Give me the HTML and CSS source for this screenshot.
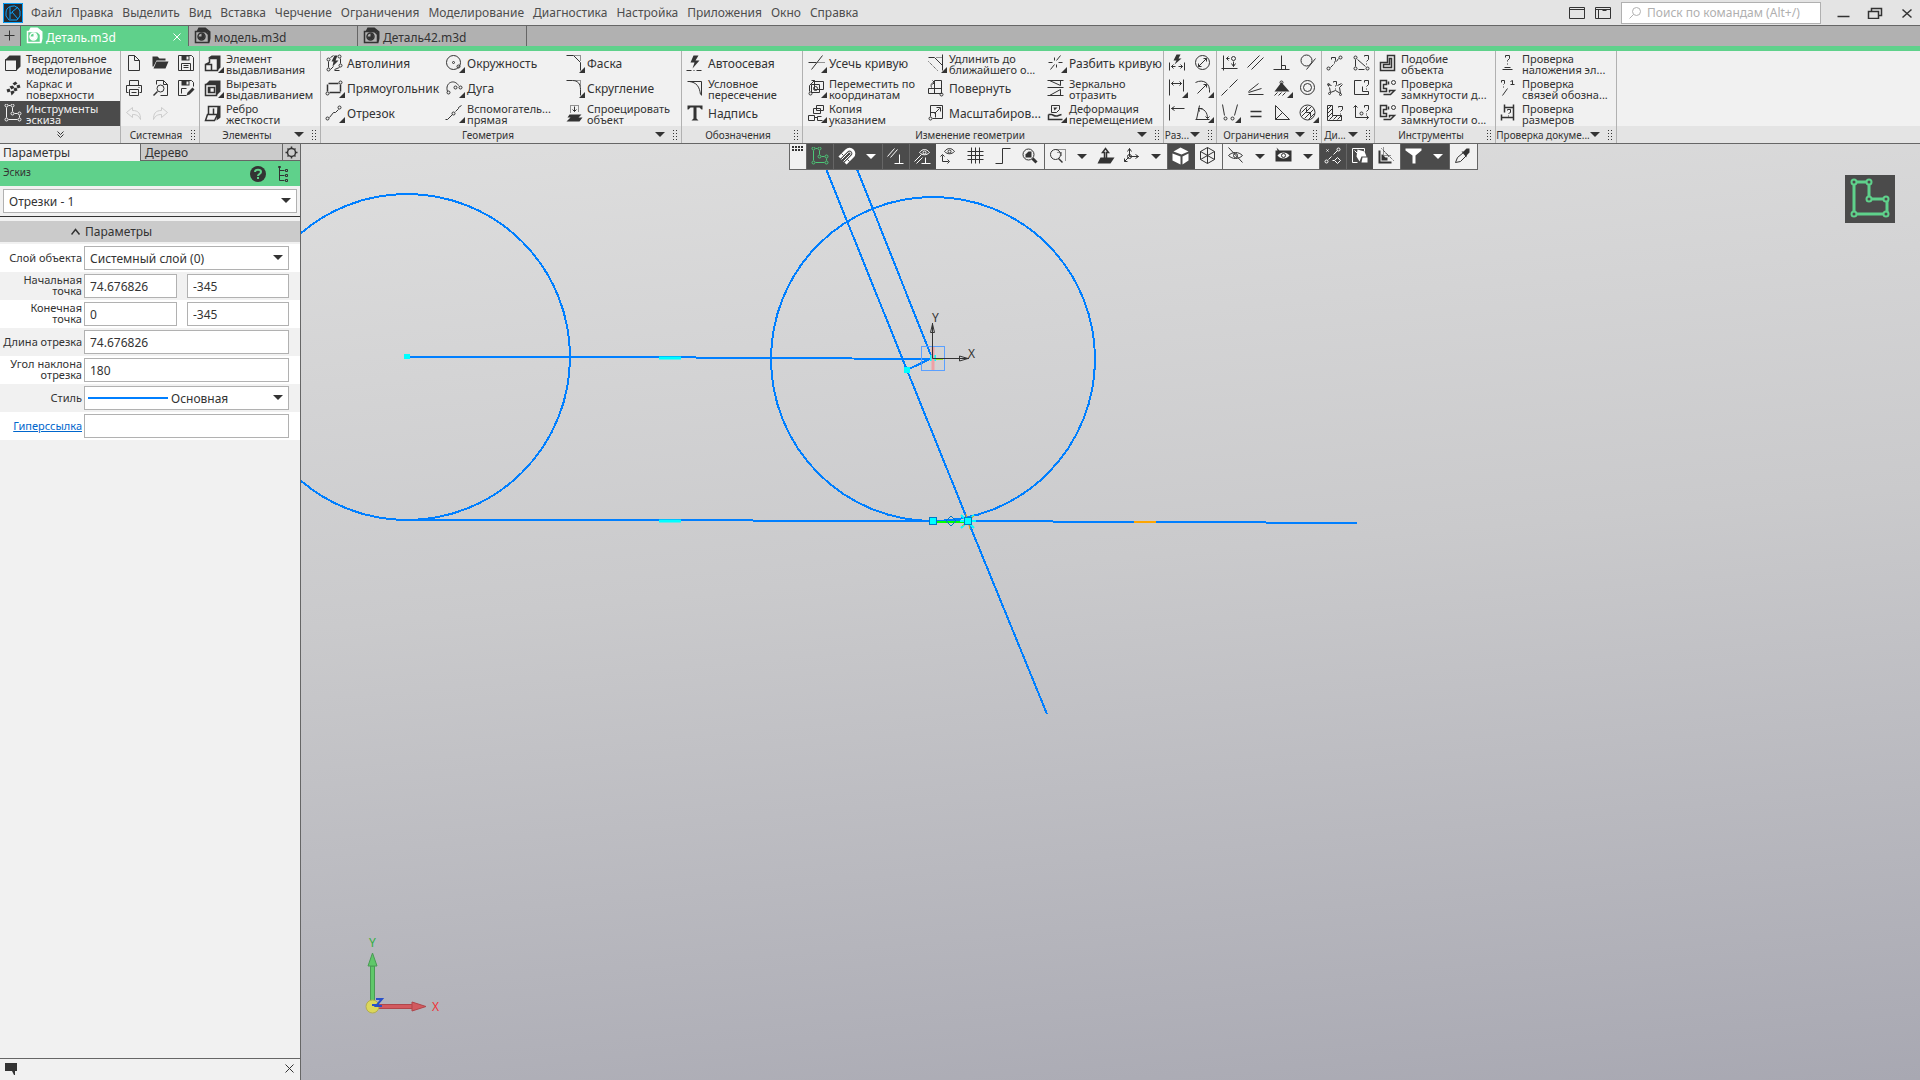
FILE: index.html
```html
<!DOCTYPE html>
<html lang="ru">
<head>
    <meta charset="UTF-8">
    <meta name="viewport" content="width=device-width, initial-scale=1.0">
    <title>Деталь.m3d</title>
    <link rel="stylesheet" href="styles.css">
</head>
<body>
    <!-- icon sprite, integer coordinates sit on pixel centres -->
    <svg class="sprite" aria-hidden="true">
        <symbol id="solid" viewBox="-0.5 -0.5 20 20"><path class="f" d="M1 5 5 1H16V12L12 16V6H1Z"/><path d="M1 5H12V16H1Z"/></symbol>
        <symbol id="surface" viewBox="-0.5 -0.5 20 20"><path class="f" d="M8 4l3-2 2 2-3 2zM12 6l3-1 1 3-3 1zM5 7l3-1 2 2-3 2zM9 9l3-1 1 3-3 1zM2 10l3-1 1 3-3 1zM6 12l3-1 1 2-3 3z"/></symbol>
        <symbol id="sketch" viewBox="-0.5 -0.5 20 20"><path d="M2 3V13M4 1H6M8 3V7M10 9H13M15 11V13M4 15H13"/><circle cx="2" cy="1" r="1.5"/><circle cx="8" cy="1" r="1.5"/><circle cx="8" cy="9" r="1.5"/><circle cx="15" cy="9" r="1.5"/><circle cx="15" cy="15" r="1.5"/><circle cx="2" cy="15" r="1.5"/></symbol>
        <symbol id="new" viewBox="-0.5 -0.5 20 20"><path d="M3 1H9L14 6V16H3ZM9 1V6H14"/></symbol>
        <symbol id="open" viewBox="-0.5 -0.5 20 20"><path class="f" d="M1 2H6L8 4H14V6H5L2 12H1ZM5 7H17L14 14H2Z"/></symbol>
        <symbol id="save" viewBox="-0.5 -0.5 20 20"><path d="M1 1H14L16 3V16H1ZM4 16V9H13V16M6 11H11M6 13H11"/><path class="f" d="M4 1H12V6H4Z"/><path class="w" d="M9 2H11V5H9Z"/></symbol>
        <symbol id="print" viewBox="-0.5 -0.5 20 20"><path d="M4 6V1H13V6M3 13H1V6H16V13H14M4 10H13V16H4ZM6 13H11M13 8H14"/></symbol>
        <symbol id="preview" viewBox="-0.5 -0.5 20 20"><path d="M5 5V1H12L16 5V16H9M12 1V5H16"/><circle cx="9" cy="9" r="3.5"/><path class="b" d="M6 12 2 16"/></symbol>
        <symbol id="saveas" viewBox="-0.5 -0.5 20 20"><path d="M9 16H1V1H14L16 3V7M4 14V9H9"/><path class="f" d="M4 1H12V6H4ZM9 16L10 13 15 8 17 10 12 15Z"/><path class="w" d="M9 2H11V5H9Z"/></symbol>
        <symbol id="undo" viewBox="-0.5 -0.5 20 20"><path d="M1 8 7 3V6C13 6 15 9 15 15 13 11 11 10 7 10V13Z"/></symbol>
        <symbol id="redo" viewBox="-0.5 -0.5 20 20"><path d="M16 8 10 3V6C4 6 2 9 2 15 4 11 6 10 10 10V13Z"/></symbol>
        <symbol id="extrude" viewBox="-0.5 -0.5 20 20"><path class="f" d="M4 3 7 1H16V13L13 16V4H4Z"/><path class="b" d="M5 4H13V16H7V10H1V16H7M1 10 5 8V4"/></symbol>
        <symbol id="cut" viewBox="-0.5 -0.5 20 20"><path class="f" d="M1 5 5 1H16V12L12 16V5Z"/><path class="b" d="M1 5H12V16H1ZM4 8H10V13H4Z"/><path class="f" d="M4 8H6V13H4Z"/></symbol>
        <symbol id="rib" viewBox="-0.5 -0.5 20 20"><path class="b" d="M4 10V2H14V14M3 10H13L10 16H1ZM9 4V10"/><path class="f" d="M13 2L16 1V13L12 16Z"/></symbol>
        <symbol id="autoline" viewBox="-0.5 -0.5 20 20"><circle cx="3" cy="5" r="1.5"/><circle cx="3" cy="15" r="1.5"/><circle cx="14" cy="2" r="1.5"/><circle cx="15" cy="11" r="1.5"/><path d="M3 7V13M5 3 8 1M9 15 14 13M15 4V9M5 15 8 12M9 16H14"/><path class="f" d="M9 1H12L10 6H13L7 12 8 7H6Z"/></symbol>
        <symbol id="rect" viewBox="-0.5 -0.5 20 20"><path class="b" d="M3 4H13M2 5V12M4 13H15M15 12V5"/><circle cx="15" cy="3" r="1.5"/><circle cx="2" cy="14" r="1.5"/></symbol>
        <symbol id="segment" viewBox="-0.5 -0.5 20 20"><path d="M4 13 8 8H10L13 5"/><circle cx="14" cy="3" r="1.5"/><circle cx="2" cy="14" r="1.5"/></symbol>
        <symbol id="circle" viewBox="-0.5 -0.5 20 20"><circle cx="8" cy="8" r="7"/><circle cx="8" cy="8" r="1"/><circle cx="13" cy="12" r="1.5"/></symbol>
        <symbol id="arc" viewBox="-0.5 -0.5 20 20"><path d="M2 12C-1 3 9-1 13 6"/><circle cx="3" cy="13" r="1.5"/><circle cx="10" cy="8" r="1.5"/><circle cx="15" cy="8" r="1.5"/></symbol>
        <symbol id="helper" viewBox="-0.5 -0.5 20 20"><path d="M0 15H2L7 10M10 7 13 4V3L16 1"/><circle cx="8" cy="9" r="1.5"/></symbol>
        <symbol id="chamfer" viewBox="-0.5 -0.5 20 20"><path d="M1 1H8L15 8V16"/><path class="d" d="M9 1H15V7"/></symbol>
        <symbol id="fillet" viewBox="-0.5 -0.5 20 20"><path d="M1 1H7C12 1 15 4 15 10V16"/><path class="d" d="M9 1H15V7"/></symbol>
        <symbol id="project" viewBox="-0.5 -0.5 20 20"><path class="d" d="M5 8V1H13V8"/><path d="M9 2V7M7 5 9 7 11 5"/><path class="f" d="M4 10H16L13 13H17L14 17H1L5 13H2Z"/></symbol>
        <symbol id="autoaxis" viewBox="-0.5 -0.5 20 20"><path class="f" d="M7 1H12L9 6H13L6 14 8 8H4Z"/><path d="M0 16H5M7 16H8M10 16H15"/></symbol>
        <symbol id="cross" viewBox="-0.5 -0.5 20 20"><path d="M1 2H15V16M3 2C10 3 13 7 14 15"/></symbol>
        <symbol id="text" viewBox="-0.5 -0.5 20 20"><path class="f" d="M1 1H16V5H15L13 3H10V14L12 16H5L7 14V3H4L2 5H1Z"/></symbol>
        <symbol id="trim" viewBox="-0.5 -0.5 20 20"><path d="M1 8H9M4 15 15 1"/><path class="d" d="M10 8H17"/></symbol>
        <symbol id="move" viewBox="-0.5 -0.5 20 20"><path d="M7 2H16V10H7ZM4 5H12V13H4ZM2 12V6L7 1M4 1H7V4"/><circle cx="3" cy="14" r="1.5"/><circle cx="8" cy="9" r="2"/></symbol>
        <symbol id="copy" viewBox="-0.5 -0.5 20 20"><path d="M9 1H16V6H9ZM6 4H13V9H6ZM1 11H7V16H1ZM7 13H10M14 12H10V16H15"/></symbol>
        <symbol id="extend" viewBox="-0.5 -0.5 20 20"><path d="M1 3H7L15 11M15 0V16"/><path class="d" d="M9 3H15M1 7 10 16"/></symbol>
        <symbol id="rotate" viewBox="-0.5 -0.5 20 20"><path d="M7 1H14V14H7ZM1 9H14M1 9V14H14M4 8C3 5 4 3 7 3M5 1 7 3 5 5"/><circle cx="14" cy="15" r="1.5"/></symbol>
        <symbol id="scale" viewBox="-0.5 -0.5 20 20"><path d="M3 1H15V14H5M3 1V12M7 9 12 4M9 3H13V7"/><path d="M3 8H8V13"/><circle cx="3" cy="14" r="1.5"/></symbol>
        <symbol id="split" viewBox="-0.5 -0.5 20 20"><path d="M1 8H5M3 15 7 10M9 6 13 1M11 8H15M7 3V6M9 10V13"/></symbol>
        <symbol id="mirror" viewBox="-0.5 -0.5 20 20"><path d="M0 1H16M2 1 13 6V1M0 8H16M0 16H16M2 16 13 10V16"/></symbol>
        <symbol id="deform" viewBox="-0.5 -0.5 20 20"><path d="M4 1H12V5L9 8H4Z"/><path class="b" d="M1 10V15H15M1 10H4C6 10 7 13 11 11L14 10"/><path class="f" d="M6 3H10L7 6Z"/></symbol>
        <symbol id="autodim" viewBox="-0.5 -0.5 20 20"><path class="f" d="M8 0H12L10 4H13L6 10 8 6H5Z"/><path d="M1 8V16M16 8V16M3 12H7M10 12H14M5 10 3 12 5 14M12 10 14 12 12 14"/></symbol>
        <symbol id="diam" viewBox="-0.5 -0.5 20 20"><circle cx="8" cy="8" r="7"/><path d="M4 12 12 4M4 9V12H7M9 4H12V7"/></symbol>
        <symbol id="lindim" viewBox="-0.5 -0.5 20 20"><path d="M1 0V16M15 0V12M3 4H13M5 2 3 4 5 6M11 2 13 4 11 6"/></symbol>
        <symbol id="raddim" viewBox="-0.5 -0.5 20 20"><path d="M1 3C9-1 16 4 15 13M3 14 12 5M9 5H12V8"/></symbol>
        <symbol id="lindim2" viewBox="-0.5 -0.5 20 20"><path d="M1 0V16M3 4H16M6 2 3 4 6 6"/></symbol>
        <symbol id="angdim" viewBox="-0.5 -0.5 20 20"><path d="M1 15H15M2 15 5 1M4 4C10 4 13 8 13 14M11 12 13 14 15 12M5 7 4 4 8 4"/></symbol>
        <symbol id="fixpt" viewBox="-0.5 -0.5 20 20"><path d="M2 1V16M0 14H16M5 4H8M7 2 5 4 7 6M12 7V12M10 9 12 12 14 9"/><circle cx="12" cy="4" r="2"/></symbol>
        <symbol id="parallel" viewBox="-0.5 -0.5 20 20"><path d="M0 13 12 1M4 15 16 3"/></symbol>
        <symbol id="perp" viewBox="-0.5 -0.5 20 20"><path d="M0 15H16M8 1V15M8 11H12V15"/></symbol>
        <symbol id="tangent" viewBox="-0.5 -0.5 20 20"><circle cx="7" cy="6" r="5.5"/><path d="M7 15 16 4"/></symbol>
        <symbol id="line" viewBox="-0.5 -0.5 20 20"><path d="M0 16 6 10M8 8 16 0"/></symbol>
        <symbol id="horiz" viewBox="-0.5 -0.5 20 20"><path d="M1 15H16M1 13 14 9M1 12 11 4"/></symbol>
        <symbol id="fix" viewBox="-0.5 -0.5 20 20"><circle cx="8" cy="3" r="1.5"/><path class="f" d="M7 4H9L16 12H1Z"/><path d="M1 16 4 13M5 16 8 13M9 16 12 13M8 3V9"/></symbol>
        <symbol id="concentric" viewBox="-0.5 -0.5 20 20"><circle cx="8" cy="8" r="7"/><circle cx="8" cy="8" r="4"/></symbol>
        <symbol id="symm" viewBox="-0.5 -0.5 20 20"><path d="M1 0 3 11M16 0 13 11"/><circle cx="4" cy="14" r="1.5"/><circle cx="11" cy="14" r="1.5"/></symbol>
        <symbol id="equal" viewBox="-0.5 -0.5 20 20"><path class="b" d="M3 7H14M3 12H14"/></symbol>
        <symbol id="triangle" viewBox="-0.5 -0.5 20 20"><path d="M2 1V15H16ZM2 15 9 8"/></symbol>
        <symbol id="hatched" viewBox="-0.5 -0.5 20 20"><circle cx="8" cy="8" r="7.5"/><path d="M2 8 8 2M2 12 12 2M5 14 14 5M9 15 15 9M7 4V8H11V12"/></symbol>
        <symbol id="qline" viewBox="-0.5 -0.5 20 20"><path d="M4 13 7 10M10 7 12 4M5 5V3H9V6L8 8V9"/><circle cx="2" cy="14" r="1.5"/><circle cx="14" cy="3" r="1.5"/></symbol>
        <symbol id="qtri" viewBox="-0.5 -0.5 20 20"><path d="M3 5V12M5 5 13 12M6 15H12M12 2V1H16V5L14 7M14 9V10"/><circle cx="3" cy="3" r="1.5"/><circle cx="3" cy="14" r="1.5"/><circle cx="15" cy="14" r="1.5"/></symbol>
        <symbol id="qstar" viewBox="-0.5 -0.5 20 20"><path d="M2 5 5 6M11 6 15 4M3 8 4 13 9 11 14 14 13 8 16 5M7 3V2H10V5L9 7M9 9V10M2 5V7"/><circle cx="2" cy="5" r="1"/><circle cx="3" cy="14" r="1"/><circle cx="14" cy="15" r="1"/></symbol>
        <symbol id="qshape" viewBox="-0.5 -0.5 20 20"><path d="M9 1H2V15H16V12H10V7M12 3V1H16V5L14 7M14 9V10"/></symbol>
        <symbol id="qhatch" viewBox="-0.5 -0.5 20 20"><path d="M1 1H6V11H15V16H1ZM1 5 5 1M1 9 6 4M1 13 6 8M3 15 7 11M7 15 11 11M11 15 15 11M12 3V2H16V5L14 7M14 9V10"/></symbol>
        <symbol id="qaxis" viewBox="-0.5 -0.5 20 20"><path d="M3 1V13H16M1 3 3 1 5 3M14 11 16 13 14 15M12 3V1H16V5L14 7M14 9V10"/><circle cx="9" cy="9" r="1.5"/></symbol>
        <symbol id="offset" viewBox="-0.5 -0.5 20 20"><path class="b" d="M8 1H15V16H1V8H8ZM10 4H12V13H4V10H10Z"/></symbol>
        <symbol id="closed" viewBox="-0.5 -0.5 20 20"><path class="b" d="M7 1H1V12H7V9H4V5H7ZM9 2V5M4 15H11L15 11H10V13"/><circle cx="14" cy="3" r="2"/></symbol>
        <symbol id="overlap" viewBox="-0.5 -0.5 20 20"><path d="M5 3V1H9V4L7 6V7M7 9V10M4 13H10M2 15H12"/></symbol>
        <symbol id="links" viewBox="-0.5 -0.5 20 20"><path d="M1 3V1H4V4L3 5M3 7V8M2 16 7 9M10 2 12 1V5M10 5H14"/></symbol>
        <symbol id="dims" viewBox="-0.5 -0.5 20 20"><path class="b" d="M4 0V8M13 0V16M1 10V16M4 3H13M1 13H13"/><path d="M7 6V5H10V8L8 9M8 11V12"/></symbol>
        <symbol id="magnet" viewBox="-0.5 -0.5 20 20"><path d="M1 10 8 3C12-1 18 5 14 9L7 16" stroke-width="3"/><path d="M3 12 10 5C12 4 13 5 12 7L5 14"/><path class="k" d="M3 6 5 8M9 12 11 14"/></symbol>
        <symbol id="paraperp" viewBox="-0.5 -0.5 20 20"><path d="M0 9 7 1M3 10 10 2M7 16H16M12 7V16"/></symbol>
        <symbol id="eyeperp" viewBox="-0.5 -0.5 20 20"><path d="M5 5C8 1 12 1 15 5 12 8 8 8 5 5ZM0 14 7 7M2 16 8 10M7 16H16M11 10V16"/><circle cx="10" cy="5" r="1.5"/></symbol>
        <symbol id="eyerot" viewBox="-0.5 -0.5 20 20"><path d="M4 4C7 0 11 0 14 4 11 7 7 7 4 4ZM2 8V14H8M0 9 2 7 4 9M7 12 9 14 7 16"/><circle cx="9" cy="4" r="1.5"/></symbol>
        <symbol id="grid" viewBox="-0.5 -0.5 20 20"><path d="M4 0V16M8 0V16M12 0V16M0 4H16M0 8H16M0 12H16"/></symbol>
        <symbol id="ortho" viewBox="-0.5 -0.5 20 20"><path d="M1 16H8V1H16"/></symbol>
        <symbol id="zoomall" viewBox="-0.5 -0.5 20 20"><circle cx="7" cy="7" r="5.5"/><path class="f" d="M4 7 7 4H10V10H4Z"/><path class="t" d="M11 11 15 15"/></symbol>
        <symbol id="zoomwin" viewBox="-0.5 -0.5 20 20"><circle cx="6" cy="7" r="5"/><path class="d" d="M6 2H16V13M8 5H12V9"/><path class="b" d="M9 11 13 15"/></symbol>
        <symbol id="normal" viewBox="-0.5 -0.5 20 20"><path class="f" d="M3 10H17L13 16H0Z"/><path d="M7 12V5H5L8 1 11 5H9V12Z" stroke-width="1.5"/></symbol>
        <symbol id="triad" viewBox="-0.5 -0.5 20 20"><path d="M6 9V1M6 9H15M6 9 1 14M4 4 6 1 8 4M12 7 15 9 12 11M1 11V14H4"/><circle cx="6" cy="9" r="2"/></symbol>
        <symbol id="cube" viewBox="-0.5 -0.5 20 20"><path class="f" d="M1 4 8 0 16 4 9 7ZM0 6 8 9V17L0 13ZM10 9 16 6V13L10 17Z"/></symbol>
        <symbol id="wire" viewBox="-0.5 -0.5 20 20"><path d="M1 4 8 0 15 4V12L8 16 1 12ZM1 4 8 8 15 4M8 0V16M1 12 8 8 15 12"/></symbol>
        <symbol id="eye" viewBox="-0.5 -0.5 20 20"><path d="M1 8C5 4 11 4 15 8 11 12 5 12 1 8ZM1 0 15 15"/><circle cx="8" cy="8" r="2"/></symbol>
        <symbol id="screen" viewBox="-0.5 -0.5 20 20"><path class="f" d="M0 3H16V14H0ZM1 0 4 3H2Z"/><path class="w" d="M2 8C5 4 11 4 14 8 11 12 5 12 2 8Z"/><circle cx="8" cy="8" r="2"/></symbol>
        <symbol id="points" viewBox="-0.5 -0.5 20 20"><path d="M4 12 7 9M9 7 13 3M2 2 4 4M2 4 4 2M8 13H10"/><circle cx="14" cy="2" r="1.5"/><circle cx="2" cy="14" r="1.5"/><path d="M13 10 16 13 13 16 10 13Z"/></symbol>
        <symbol id="bodies" viewBox="-0.5 -0.5 20 20"><path d="M1 1H13M1 1V15H6M13 1V4M3 3 8 8"/><path class="f" d="M6 2 13 4 15 9H10L8 14 5 9ZM11 10H16V15H10Z"/></symbol>
        <symbol id="shade" viewBox="-0.5 -0.5 20 20"><path class="f" d="M1 3H3V14H14V16H1ZM5 7 8 10H10V13H4V7Z"/><path class="d" d="M4 1 16 13M6 0V8H14M7 4 12 10"/></symbol>
        <symbol id="filter" viewBox="-0.5 -0.5 20 20"><path class="f" d="M0 1H16V3L10 8V16H7V8L0 3Z"/></symbol>
        <symbol id="dropper" viewBox="-0.5 -0.5 20 20"><path d="M1 15 3 10 9 5 12 8 6 14Z"/><path class="f" d="M7 4 9 4 12 1 15 1 15 5 12 8V10Z"/></symbol>
        <symbol id="part" viewBox="-0.5 -0.5 20 20"><path class="f" d="M2 4 4 0H11L16 4V11L15 16 13 5Z"/><path class="b" d="M1 4H11L14 7V15H1Z"/><circle class="b" cx="7" cy="9" r="3.5"/><path class="f" d="M7 6A3 3 0 1 1 4 9L7 9Z"/></symbol>
    </svg>

    <header class="titlebar">
        <svg class="logo" viewBox="0 0 20 20"><rect width="20" height="20"/><path d="M.5.5H19.5V19.5H.5ZM3 10A7 7 0 0 1 15 5L17 8V13L14 17H6L3 13ZM7 4V16M9 9 15 4M9 9 15 16M7 10H9"/></svg>
        <nav class="menu">
            <a href="#">Файл</a>
            <a href="#">Правка</a>
            <a href="#">Выделить</a>
            <a href="#">Вид</a>
            <a href="#">Вставка</a>
            <a href="#">Черчение</a>
            <a href="#">Ограничения</a>
            <a href="#">Моделирование</a>
            <a href="#">Диагностика</a>
            <a href="#">Настройка</a>
            <a href="#">Приложения</a>
            <a href="#">Окно</a>
            <a href="#">Справка</a>
        </nav>
        <button class="win" aria-label="Окно"><svg viewBox="-0.5 -0.5 16 12"><path d="M0 0H15V11H0ZM0 2H15"/></svg></button>
        <button class="win" aria-label="Панели"><svg viewBox="-0.5 -0.5 16 12"><path d="M0 0H15V11H0ZM0 2H15M3 2V11M7 3H11"/></svg></button>
        <div class="search">
            <svg viewBox="-0.5 -0.5 12 12"><circle cx="7" cy="4" r="4"/><path d="M4 7 0 11"/></svg>
            <input type="text" placeholder="Поиск по командам (Alt+/)" aria-label="Поиск по командам">
        </div>
        <button class="win sys" aria-label="Свернуть"><svg viewBox="-0.5 -0.5 16 12"><path class="b" d="M2 9H14"/></svg></button>
        <button class="win sys" aria-label="Восстановить"><svg viewBox="-0.5 -0.5 16 12"><path class="b" d="M1 4H11V11H1ZM4 4V1H14V8H11"/></svg></button>
        <button class="win sys" aria-label="Закрыть"><svg viewBox="-0.5 -0.5 16 12"><path class="b" d="M3 2 12 10M12 2 3 10"/></svg></button>
    </header>

    <div class="doctabs">
        <button class="plus" aria-label="Новый документ"><svg viewBox="-0.5 -0.5 12 12"><path d="M5 0V10M0 5H10"/></svg></button>
        <button class="doctab active"><svg class="icon"><use href="#part"/></svg><span>Деталь.m3d</span><svg class="x" viewBox="-0.5 -0.5 8 8"><path d="M0 0 7 7M7 0 0 7"/></svg></button>
        <button class="doctab"><svg class="icon"><use href="#part"/></svg><span>модель.m3d</span></button>
        <button class="doctab"><svg class="icon"><use href="#part"/></svg><span>Деталь42.m3d</span></button>
    </div>

    <div class="ribbon">
        <section class="group">
            <div class="tools">
                <button class="tool two"><svg class="icon"><use href="#solid"/></svg><span>Твердотельное<br>моделирование</span></button>
                <button class="tool two"><svg class="icon"><use href="#surface"/></svg><span>Каркас и<br>поверхности</span></button>
                <button class="tool two selected"><svg class="icon"><use href="#sketch"/></svg><span>Инструменты<br>эскиза</span></button>
            </div>
            <footer><svg class="chevrons" viewBox="-0.5 -0.5 8 8"><path d="M0 0 3 3 6 0M0 3 3 6 6 3"/></svg></footer>
        </section>
        <section class="group">
            <div class="tools small c3">
                <button class="tool" aria-label="Создать"><svg class="icon"><use href="#new"/></svg></button>
                <button class="tool" aria-label="Открыть"><svg class="icon"><use href="#open"/></svg></button>
                <button class="tool" aria-label="Сохранить"><svg class="icon"><use href="#save"/></svg></button>
                <button class="tool" aria-label="Печать"><svg class="icon"><use href="#print"/></svg></button>
                <button class="tool" aria-label="Просмотр"><svg class="icon"><use href="#preview"/></svg></button>
                <button class="tool" aria-label="Сохранить как"><svg class="icon"><use href="#saveas"/></svg></button>
                <button class="tool" disabled aria-label="Отменить"><svg class="icon"><use href="#undo"/></svg></button>
                <button class="tool" disabled aria-label="Повторить"><svg class="icon"><use href="#redo"/></svg></button>
            </div>
            <footer><span>Системная</span><i class="grip"></i></footer>
        </section>
        <section class="group">
            <div class="tools">
                <button class="tool two more"><svg class="icon"><use href="#extrude"/></svg><span>Элемент<br>выдавливания</span></button>
                <button class="tool two more"><svg class="icon"><use href="#cut"/></svg><span>Вырезать<br>выдавливанием</span></button>
                <button class="tool two"><svg class="icon"><use href="#rib"/></svg><span>Ребро<br>жесткости</span></button>
            </div>
            <footer><span>Элементы</span><i class="down"></i><i class="grip"></i></footer>
        </section>
        <section class="group">
            <div class="tools c3">
                <button class="tool"><svg class="icon"><use href="#autoline"/></svg><span>Автолиния</span></button>
                <button class="tool more"><svg class="icon"><use href="#circle"/></svg><span>Окружность</span></button>
                <button class="tool more"><svg class="icon"><use href="#chamfer"/></svg><span>Фаска</span></button>
                <button class="tool more"><svg class="icon"><use href="#rect"/></svg><span>Прямоугольник</span></button>
                <button class="tool more"><svg class="icon"><use href="#arc"/></svg><span>Дуга</span></button>
                <button class="tool more"><svg class="icon"><use href="#fillet"/></svg><span>Скругление</span></button>
                <button class="tool more"><svg class="icon"><use href="#segment"/></svg><span>Отрезок</span></button>
                <button class="tool two more"><svg class="icon"><use href="#helper"/></svg><span>Вспомогатель...<br>прямая</span></button>
                <button class="tool two"><svg class="icon"><use href="#project"/></svg><span>Спроецировать<br>объект</span></button>
            </div>
            <footer><span>Геометрия</span><i class="down"></i><i class="grip"></i></footer>
        </section>
        <section class="group">
            <div class="tools">
                <button class="tool"><svg class="icon"><use href="#autoaxis"/></svg><span>Автоосевая</span></button>
                <button class="tool two"><svg class="icon"><use href="#cross"/></svg><span>Условное<br>пересечение</span></button>
                <button class="tool"><svg class="icon"><use href="#text"/></svg><span>Надпись</span></button>
            </div>
            <footer><span>Обозначения</span><i class="grip"></i></footer>
        </section>
        <section class="group">
            <div class="tools c3">
                <button class="tool more"><svg class="icon"><use href="#trim"/></svg><span>Усечь кривую</span></button>
                <button class="tool two more"><svg class="icon"><use href="#extend"/></svg><span>Удлинить до<br>ближайшего о...</span></button>
                <button class="tool more"><svg class="icon"><use href="#split"/></svg><span>Разбить кривую</span></button>
                <button class="tool two more"><svg class="icon"><use href="#move"/></svg><span>Переместить по<br>координатам</span></button>
                <button class="tool"><svg class="icon"><use href="#rotate"/></svg><span>Повернуть</span></button>
                <button class="tool two"><svg class="icon"><use href="#mirror"/></svg><span>Зеркально<br>отразить</span></button>
                <button class="tool two more"><svg class="icon"><use href="#copy"/></svg><span>Копия<br>указанием</span></button>
                <button class="tool"><svg class="icon"><use href="#scale"/></svg><span>Масштабиров...</span></button>
                <button class="tool two more"><svg class="icon"><use href="#deform"/></svg><span>Деформация<br>перемещением</span></button>
            </div>
            <footer><span>Изменение геометрии</span><i class="down"></i><i class="grip"></i></footer>
        </section>
        <section class="group">
            <div class="tools small c2">
                <button class="tool" aria-label="Авторазмер"><svg class="icon"><use href="#autodim"/></svg></button>
                <button class="tool" aria-label="Диаметр"><svg class="icon"><use href="#diam"/></svg></button>
                <button class="tool more" aria-label="Линейный"><svg class="icon"><use href="#lindim"/></svg></button>
                <button class="tool more" aria-label="Радиус"><svg class="icon"><use href="#raddim"/></svg></button>
                <button class="tool" aria-label="От базы"><svg class="icon"><use href="#lindim2"/></svg></button>
                <button class="tool more" aria-label="Угловой"><svg class="icon"><use href="#angdim"/></svg></button>
            </div>
            <footer><span>Раз...</span><i class="down"></i><i class="grip"></i></footer>
        </section>
        <section class="group">
            <div class="tools small c4">
                <button class="tool" aria-label="Объединить"><svg class="icon"><use href="#fixpt"/></svg></button>
                <button class="tool" aria-label="Параллельность"><svg class="icon"><use href="#parallel"/></svg></button>
                <button class="tool" aria-label="Перпендикулярность"><svg class="icon"><use href="#perp"/></svg></button>
                <button class="tool" aria-label="Касание"><svg class="icon"><use href="#tangent"/></svg></button>
                <button class="tool" aria-label="Коллинеарность"><svg class="icon"><use href="#line"/></svg></button>
                <button class="tool" aria-label="Биссектриса"><svg class="icon"><use href="#horiz"/></svg></button>
                <button class="tool more" aria-label="Фиксация"><svg class="icon"><use href="#fix"/></svg></button>
                <button class="tool" aria-label="Концентричность"><svg class="icon"><use href="#concentric"/></svg></button>
                <button class="tool more" aria-label="Симметрия"><svg class="icon"><use href="#symm"/></svg></button>
                <button class="tool" aria-label="Равенство"><svg class="icon"><use href="#equal"/></svg></button>
                <button class="tool" aria-label="Угол"><svg class="icon"><use href="#triangle"/></svg></button>
                <button class="tool more" aria-label="Отобразить"><svg class="icon"><use href="#hatched"/></svg></button>
            </div>
            <footer><span>Ограничения</span><i class="down"></i><i class="grip"></i></footer>
        </section>
        <section class="group">
            <div class="tools small c2">
                <button class="tool" aria-label="Длина"><svg class="icon"><use href="#qline"/></svg></button>
                <button class="tool" aria-label="Угол"><svg class="icon"><use href="#qtri"/></svg></button>
                <button class="tool" aria-label="Кривая"><svg class="icon"><use href="#qstar"/></svg></button>
                <button class="tool" aria-label="Контур"><svg class="icon"><use href="#qshape"/></svg></button>
                <button class="tool" aria-label="Площадь"><svg class="icon"><use href="#qhatch"/></svg></button>
                <button class="tool" aria-label="Координаты"><svg class="icon"><use href="#qaxis"/></svg></button>
            </div>
            <footer><span>Ди...</span><i class="down"></i><i class="grip"></i></footer>
        </section>
        <section class="group">
            <div class="tools">
                <button class="tool two"><svg class="icon"><use href="#offset"/></svg><span>Подобие<br>объекта</span></button>
                <button class="tool two"><svg class="icon"><use href="#closed"/></svg><span>Проверка<br>замкнутости д...</span></button>
                <button class="tool two"><svg class="icon"><use href="#closed"/></svg><span>Проверка<br>замкнутости о...</span></button>
            </div>
            <footer><span>Инструменты</span><i class="grip"></i></footer>
        </section>
        <section class="group">
            <div class="tools">
                <button class="tool two"><svg class="icon"><use href="#overlap"/></svg><span>Проверка<br>наложения эл...</span></button>
                <button class="tool two"><svg class="icon"><use href="#links"/></svg><span>Проверка<br>связей обозна...</span></button>
                <button class="tool two"><svg class="icon"><use href="#dims"/></svg><span>Проверка<br>размеров</span></button>
            </div>
            <footer><span>Проверка докуме...</span><i class="down"></i><i class="grip"></i></footer>
        </section>
        <div class="rest"></div>
    </div>

    <main class="work">
        <aside class="panel">
            <div class="paneltabs">
                <button class="active">Параметры</button>
                <button>Дерево</button>
                <button class="gear" aria-label="Настройка панели"><svg viewBox="-0.5 -0.5 13 13"><circle cx="6" cy="6" r="4" class="b"/><path class="b" d="M6 0V2M6 10V12M0 6H2M10 6H12M2 2 3 3M9 9 10 10M10 2 9 3M3 9 2 10"/></svg></button>
            </div>
            <div class="panelhead">
                <h2>Эскиз</h2>
                <button aria-label="Справка"><svg viewBox="0 0 16 16"><circle class="f" cx="8" cy="8" r="8"/><path class="q" d="M5 6C5 3 11 3 11 6 11 8 8 8 8 10M8 11V13"/></svg></button>
                <button aria-label="Структура"><svg viewBox="-0.5 -0.5 16 16"><path d="M4 1V14M4 4H9M4 9H9M4 14H9M3 0H5V1H3ZM10 3H12V5H10ZM10 8H12V10H10ZM10 13H12V15H10Z"/></svg></button>
            </div>
            <div class="objects">
                <div class="select"><select aria-label="Объекты"><option>Отрезки - 1</option></select></div>
            </div>
            <button class="section"><svg viewBox="-0.5 -0.5 10 8"><path class="b" d="M0 6 4 1 8 6"/></svg>Параметры</button>
            <form class="params">
                <div class="row">
                    <label for="layer">Слой объекта</label>
                    <div class="select"><select id="layer"><option>Системный слой (0)</option></select></div>
                </div>
                <div class="row">
                    <label for="x1">Начальная<br>точка</label>
                    <input type="text" id="x1" class="half" value="74.676826">
                    <input type="text" value="-345" aria-label="Начальная точка Y">
                </div>
                <div class="row">
                    <label for="x2">Конечная<br>точка</label>
                    <input type="text" id="x2" class="half" value="0">
                    <input type="text" value="-345" aria-label="Конечная точка Y">
                </div>
                <div class="row">
                    <label for="len">Длина отрезка</label>
                    <input type="text" id="len" value="74.676826">
                </div>
                <div class="row">
                    <label for="angle">Угол наклона<br>отрезка</label>
                    <input type="text" id="angle" value="180">
                </div>
                <div class="row">
                    <label for="style">Стиль</label>
                    <div class="select line"><select id="style"><option>Основная</option></select></div>
                </div>
                <div class="row">
                    <label for="link"><a href="#">Гиперссылка</a></label>
                    <input type="text" id="link">
                </div>
            </form>
            <div class="status">
                <svg viewBox="0 0 12 12"><path class="f" d="M0 0H12V8H10V12H9L7 8H0Z"/></svg>
                <button aria-label="Закрыть"><svg viewBox="-0.5 -0.5 9 9"><path d="M0 0 8 8M8 0 0 8"/></svg></button>
            </div>
        </aside>

        <div class="canvas">
            <svg class="drawing">
                <g transform="translate(-301 -144)">
                    <!-- wheels -->
                    <circle class="ln" cx="407" cy="357" r="163"/>
                    <circle class="ln" cx="933" cy="359" r="162"/>
                    <!-- frame -->
                    <path class="ln" d="M407 357H620L771 358L932 359M407 520L570 520L932 521L1170 522L1357 523"/>
                    <path class="ln" d="M820 154L907 370L968 521L1047 714M851 154L932 358L907 370"/>
                    <path class="cyan" d="M659 358H681M659 521H681"/>
                    <path class="orange" d="M1134 522H1156"/>
                    <rect class="dot" x="404" y="354" width="6" height="5"/>
                    <rect class="dot" x="904" y="367" width="6" height="6"/>
                    <rect class="dot" x="930" y="355" width="6" height="6"/>
                    <!-- origin -->
                    <path class="red" d="M933 347V371"/>
                    <rect class="frame" x="921.5" y="346.5" width="23" height="24"/>
                    <path class="lime" d="M936 359H943"/>
                    <path class="axis" d="M932.5 358.5V323M932.5 358.5H969M930.5 332.5H934.5L932.5 324ZM959.5 356V361L968 358.5Z"/>
                    <text x="932" y="322">Y</text>
                    <text x="968" y="358">X</text>
                    <!-- selected segment -->
                    <path class="green" d="M936 522H966"/>
                    <path class="burst" d="M961 515 974 528M974 515 961 528M960 521H976"/>
                    <path class="burst2" d="M966 514 970 529M962 526 974 516"/>
                    <rect class="knot" x="929.5" y="517.5" width="7" height="7"/>
                    <rect class="knot" x="964.5" y="517.5" width="7" height="7"/>
                    <path class="mid" d="M951 516 956 521 951 526 946 521Z"/>
                    <!-- view axes -->
                    <rect class="shaft-y" x="370.5" y="966" width="4" height="36"/>
                    <path class="cone-y" d="M368 966H377L372.5 953Z"/>
                    <rect class="shaft-x" x="378" y="1004.5" width="35" height="4"/>
                    <path class="cone-x" d="M412 1002V1011L426 1006.5Z"/>
                    <circle class="ball" cx="372.500" cy="1006.500" r="6.500"/>
                    <path class="z" d="M372 1005H379M376 999H382L376 1006H382"/>
                    <text class="ty" x="369" y="947">Y</text>
                    <text class="tx" x="432" y="1011">X</text>
                </g>
            </svg>

            <div class="viewbar">
                <i class="handle"></i>
                <div class="set"><button class="on green" aria-label="Режим эскиза"><svg class="icon"><use href="#sketch"/></svg></button></div>
                <div class="set"><button class="on" aria-label="Привязки"><svg class="icon"><use href="#magnet"/></svg></button><button class="on arrow" aria-label="Список привязок"><i class="down"></i></button></div>
                <div class="set"><button class="on" aria-label="Ограничения"><svg class="icon"><use href="#paraperp"/></svg></button></div>
                <div class="set"><button class="on" aria-label="Показать ограничения"><svg class="icon"><use href="#eyeperp"/></svg></button></div>
                <div class="set plain wide"><button aria-label="Степени свободы"><svg class="icon"><use href="#eyerot"/></svg></button><button aria-label="Сетка"><svg class="icon"><use href="#grid"/></svg></button><button aria-label="Ортогональное черчение"><svg class="icon"><use href="#ortho"/></svg></button><button aria-label="Показать все"><svg class="icon"><use href="#zoomall"/></svg></button></div>
                <div class="set"><button aria-label="Увеличить рамкой"><svg class="icon"><use href="#zoomwin"/></svg></button><button class="arrow" aria-label="Масштаб"><i class="down"></i></button><button aria-label="Нормально к"><svg class="icon"><use href="#normal"/></svg></button><button aria-label="Ориентация"><svg class="icon"><use href="#triad"/></svg></button><button class="arrow" aria-label="Список видов"><i class="down"></i></button></div>
                <div class="set wide"><button class="on" aria-label="Полутоновое"><svg class="icon"><use href="#cube"/></svg></button><button aria-label="Каркас"><svg class="icon"><use href="#wire"/></svg></button></div>
                <div class="set"><button aria-label="Скрыть"><svg class="icon"><use href="#eye"/></svg></button><button class="arrow" aria-label="Что скрыть"><i class="down"></i></button><button aria-label="Изображение"><svg class="icon"><use href="#screen"/></svg></button><button class="arrow" aria-label="Вид изображения"><i class="down"></i></button></div>
                <div class="set"><button class="on" aria-label="Точки"><svg class="icon"><use href="#points"/></svg></button></div>
                <div class="set"><button class="on" aria-label="Тела"><svg class="icon"><use href="#bodies"/></svg></button></div>
                <div class="set plain wide"><button aria-label="Сечение"><svg class="icon"><use href="#shade"/></svg></button></div>
                <div class="set"><button class="on" aria-label="Фильтр"><svg class="icon"><use href="#filter"/></svg></button><button class="on arrow" aria-label="Список фильтров"><i class="down"></i></button></div>
                <div class="set wide"><button aria-label="Копировать свойства"><svg class="icon"><use href="#dropper"/></svg></button></div>
            </div>

            <button class="mode" aria-label="Эскиз">
                <svg viewBox="0 0 50 48"><path d="M9 7H24V24H42V39H9Z"/><circle cx="9" cy="7" r="2.500"/><circle cx="24" cy="7" r="2.500"/><circle cx="24" cy="24" r="2.500"/><circle cx="41" cy="24" r="2.500"/><circle cx="41" cy="39" r="2.500"/><circle cx="9" cy="39" r="2.500"/></svg>
            </button>
        </div>
    </main>
</body>
</html>
```
FILE: styles.css
```css
* {
    box-sizing: border-box;
}
body {
    margin: 0;
    height: 100vh;
    display: flex;
    flex-direction: column;
    overflow: hidden;
    font-family: "Noto Sans", sans-serif;
    font-size: 12px;
    color: #333;
    background: #f1f1f1;
}
button, input, select {
    font: inherit;
    color: inherit;
}
button {
    border: 0;
    padding: 0;
    margin: 0;
    background: none;
}
a {
    color: inherit;
    text-decoration: none;
}

/* icons */
svg {
    display: block;
    flex: none;
    fill: none;
    stroke: currentColor;
    stroke-width: 1px;
}
.sprite {
    position: absolute;
    width: 0;
    height: 0;
}
.icon {
    width: 20px;
    height: 20px;
}
.f {
    fill: currentColor;
    stroke: none;
}
.w {
    fill: #f1f1f1;
    stroke: none;
}
.k {
    stroke: #4b4b4b;
}
.b {
    stroke-width: 1.5px;
}
.t {
    stroke-width: 3px;
}
.d {
    stroke-dasharray: 1 1;
}
.down {
    width: 0;
    height: 0;
    border: 5px solid transparent;
    border-top-color: currentColor;
    border-bottom: 0;
}

/* title bar */
.titlebar {
    display: flex;
    align-items: center;
    height: 26px;
    flex: none;
    padding: 0 5px 0 3px;
    background: #e4e4e4;
    border-bottom: 1px solid #666;
}
.logo {
    width: 20px;
    height: 20px;
    stroke: #0aa5ff;
}
.logo rect {
    fill: #262a30;
    stroke: none;
}
.menu {
    display: flex;
    flex: 1;
    gap: 9px;
    padding-left: 8px;
    color: #4d4d4d;
}
.win {
    margin-right: 10px;
}
.win svg {
    width: 16px;
    height: 12px;
}
.win.sys {
    margin: 0 0 0 14px;
}
.win.sys + .win.sys {
    margin-left: 16px;
}
.search {
    display: flex;
    align-items: center;
    gap: 6px;
    width: 200px;
    height: 22px;
    padding-left: 7px;
    background: #fff;
    border: 1px solid #b0b0b0;
    color: #b0b0b0;
}
.search svg {
    width: 12px;
    height: 12px;
}
.search input {
    flex: 1;
    min-width: 0;
    border: 0;
    padding: 0;
    background: none;
    outline: 0;
}
.search input::placeholder {
    color: #b0b0b0;
}

/* document tabs */
.doctabs {
    display: flex;
    flex: none;
    height: 25px;
    background: #b1b1b1;
    border-bottom: 5px solid #5fd18b;
}
.plus {
    width: 21px;
    padding-left: 4px;
    border-right: 1px solid #666;
}
.plus svg {
    width: 12px;
    height: 12px;
}
.doctab {
    display: flex;
    align-items: center;
    width: 169px;
    padding: 2px 7px 0 5px;
    border-right: 1px solid #666;
}
.doctab.active {
    width: 168px;
    background: #5fd18b;
    color: #fff;
}
.doctab .x {
    width: 8px;
    height: 8px;
    margin-left: auto;
}

/* ribbon */
.ribbon {
    display: flex;
    flex: none;
    border-bottom: 1px solid #666;
}
.group {
    border-right: 1px solid #b1b1b1;
}
.tools {
    display: grid;
    grid-template-columns: 120px;
    grid-template-rows: repeat(3, 25px);
}
.tools.c3 {
    grid-template-columns: repeat(3, 120px);
}
.tools.small {
    grid-template-columns: repeat(2, 26px);
}
.tools.small.c3 {
    grid-template-columns: repeat(3, 26px);
}
.tools.small.c4 {
    grid-template-columns: repeat(4, 26px);
}
.tool {
    display: flex;
    align-items: center;
    gap: 2px;
    padding-left: 4px;
    line-height: 11px;
    text-align: left;
    white-space: nowrap;
    position: relative;
}
.tool.two {
    font-size: 11px;
}
.tool:disabled {
    color: #ccc;
}
.tool.selected {
    background: #4b4b4b;
    color: #f1f1f1;
}
.tool.more::after {
    content: "";
    position: absolute;
    left: 18px;
    bottom: 3px;
    border: 3px solid;
    border-top-color: transparent;
    border-left-color: transparent;
}
.group footer, .rest::after {
    display: flex;
    align-items: center;
    height: 17px;
    background: #e4e4e4;
}
.group footer {
    width: 0;
    min-width: 100%;
    padding-right: 4px;
    font-size: 10px;
    line-height: 17px;
}
.group footer span {
    flex: 1;
    padding-top: 1px;
    text-align: center;
    white-space: nowrap;
}
.group footer .down {
    margin-right: 8px;
}
.grip {
    width: 4px;
    height: 10px;
    background: conic-gradient(at 1px 1px, transparent 75%, #333 0) 0 0 / 3px 3px;
}
.chevrons {
    width: 8px;
    height: 8px;
    margin-left: 57px;
}
.rest {
    flex: 1;
    display: flex;
    flex-direction: column;
    justify-content: flex-end;
}
.rest::after {
    content: "";
}

/* work area */
.work {
    display: flex;
    flex: 1;
    min-height: 0;
}
.panel {
    display: flex;
    flex-direction: column;
    width: 301px;
    flex: none;
    border-right: 1px solid #666;
}
.paneltabs {
    display: flex;
    height: 17px;
}
.paneltabs button {
    width: 142px;
    padding-left: 4px;
    line-height: 15px;
    text-align: left;
    background: #cbcbcb;
    border-right: 1px solid #666;
    border-bottom: 1px solid #666;
}
.paneltabs .active {
    width: 141px;
    padding-left: 3px;
    background: #f1f1f1;
    border-bottom: 0;
}
.paneltabs .gear {
    flex: 1;
    padding-left: 2px;
    border-right: 0;
}
.gear svg {
    width: 13px;
    height: 13px;
}
.panelhead {
    display: flex;
    align-items: center;
    gap: 9px;
    height: 25px;
    padding: 0 9px 0 3px;
    background: #5fd18b;
}
.panelhead h2 {
    flex: 1;
    margin: 0;
    padding-bottom: 4px;
    font-size: 10px;
    font-weight: 400;
}
.panelhead svg {
    width: 16px;
    height: 16px;
}
.q {
    stroke: #5fd18b;
    stroke-width: 2px;
}
.objects {
    padding: 3px;
    border-bottom: 1px solid #333;
}
.select {
    position: relative;
    flex: 1;
}
.select::after {
    content: "";
    position: absolute;
    right: 6px;
    top: 9px;
    border: 5px solid transparent;
    border-top-color: #333;
    border-bottom: 0;
    pointer-events: none;
}
select, .params input {
    display: block;
    width: 100%;
    height: 24px;
    padding: 0 5px;
    background: #fff;
    border: 1px solid #b1b1b1;
    border-radius: 0;
    appearance: none;
}
.section {
    display: flex;
    align-items: center;
    gap: 4px;
    height: 21px;
    margin: 4px 0 2px;
    padding-left: 71px;
    background: #cbcbcb;
}
.section svg {
    width: 10px;
    height: 8px;
}
.params {
    flex: 1;
}
.row {
    display: flex;
    align-items: center;
    gap: 10px;
    height: 28px;
    padding-right: 11px;
}
.row:nth-child(odd) {
    background: #fff;
}
.row label {
    width: 82px;
    margin-right: -8px;
    padding-bottom: 2px;
    text-align: right;
    font-size: 11px;
    line-height: 11px;
    white-space: nowrap;
}
.row label a {
    color: #0066cc;
    text-decoration: underline;
}
.row input {
    flex: 1;
    min-width: 0;
}
.row .half {
    flex: none;
    width: 93px;
}
.line select {
    padding-left: 86px;
    background: linear-gradient(#007fff, #007fff) 3px 10px / 80px 2px no-repeat #fff;
}
.status {
    display: flex;
    align-items: center;
    justify-content: space-between;
    height: 22px;
    padding: 0 6px 2px 5px;
    border-top: 1px solid #666;
}
.status svg {
    width: 12px;
    height: 12px;
}
.status button svg {
    width: 9px;
    height: 9px;
}

/* drawing */
.canvas {
    position: relative;
    flex: 1;
    overflow: hidden;
    background: linear-gradient(175deg, #dedede 0%, #cacacc 45%, #a8a8b2 100%);
}
.drawing {
    width: 100%;
    height: 100%;
    stroke: none;
}
.ln {
    stroke: #007fff;
    stroke-width: 2px;
    shape-rendering: crispEdges;
}
.cyan {
    stroke: #0ff;
    stroke-width: 3px;
}
.orange {
    stroke: #ffa500;
    stroke-width: 2px;
}
.drawing .green {
    stroke: #0f0;
    stroke-width: 2px;
}
.red {
    stroke: #f0a0a5;
    stroke-width: 3px;
}
.lime {
    stroke: #a0e632;
    stroke-width: 2px;
}
.dot {
    fill: #0ff;
}
.frame {
    stroke: #5aa0ff;
}
.axis {
    stroke: #333;
}
.drawing text {
    font-size: 12px;
    fill: #333;
}
.burst {
    stroke: #0ff;
    stroke-width: 2px;
}
.burst2 {
    stroke: #ffa500;
}
.knot {
    fill: #0ff;
    stroke: #0078c8;
}
.mid {
    stroke: #0078c8;
}
.shaft-y, .cone-y {
    fill: #5fc869;
    stroke: #4a9a55;
}
.shaft-x, .cone-x {
    fill: #d25a5f;
    stroke: #b0464b;
}
.ball {
    fill: #dcd75a;
    stroke: #b4af50;
}
.z {
    stroke: #2850c8;
    stroke-width: 2px;
}
.drawing .ty {
    fill: #32af41;
}
.drawing .tx {
    fill: #f03237;
}

/* view toolbar over the drawing */
.viewbar {
    position: absolute;
    left: 488px;
    top: 0;
    display: flex;
    height: 26px;
    background: #f1f1f1;
    border: 1px solid #666;
    border-top: 0;
}
.handle {
    width: 11px;
    height: 5px;
    margin: 2px 3px 0 2px;
    background: conic-gradient(at 2px 2px, transparent 75%, #333 0) 0 0 / 3px 3px;
}
.set {
    display: flex;
    border-left: 1px solid #666;
}
.set.plain {
    border-left: 0;
}
.set button {
    width: 26px;
    padding-left: 4px;
}
.set.wide button {
    width: 27px;
}
.set .on {
    background: #4b4b4b;
    color: #fff;
}
.set .on.green {
    color: #4cc878;
}
.set .arrow {
    width: 22px;
    padding-left: 6px;
}
.set .down {
    display: block;
}
.mode {
    position: absolute;
    top: 31px;
    right: 25px;
    width: 50px;
    height: 48px;
    background: #4b4b4b;
}
.mode svg {
    width: 50px;
    height: 48px;
    stroke: #5fd18b;
    stroke-width: 3px;
}
.mode circle {
    fill: #4b4b4b;
    stroke-width: 2px;
}
```
